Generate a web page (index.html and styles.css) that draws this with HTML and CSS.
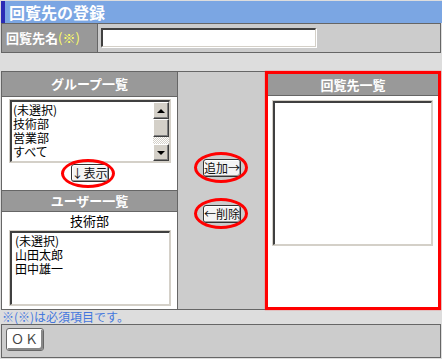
FILE: index.html
```html
<!DOCTYPE html>
<html lang="ja">
<head>
<meta charset="utf-8">
<title>回覧先の登録</title>
<link rel="stylesheet" href="styles.css">
</head>
<body>
<div class="title">回覧先の登録</div>
<div class="form-row">
  <div class="label">回覧先名<span class="req">(※)</span></div>
  <div class="value"><div class="input"></div></div>
</div>
<div class="main">
  <div class="left">
    <div class="panel-head">グループ一覧</div>
    <div class="group-body">
      <div class="listbox group-list">
        <div class="lb-inner">
          <div class="items">
            <div>(未選択)</div>
            <div>技術部</div>
            <div>営業部</div>
            <div>すべて</div>
          </div>
          <div class="scrollbar">
            <div class="sb-btn"><span class="arrow-up"></span></div>
            <div class="sb-thumb"></div>
            <div class="sb-track"></div>
            <div class="sb-btn"><span class="arrow-down"></span></div>
          </div>
        </div>
      </div>
      <div class="center">
        <span class="mark mark-show"><span class="btn">↓表示</span></span>
      </div>
    </div>
    <div class="panel-head user-head">ユーザー一覧</div>
    <div class="user-body">
      <div class="dept">技術部</div>
      <div class="listbox user-list">
        <div class="lb-inner">
          <div class="items">
            <div>(未選択)</div>
            <div>山田太郎</div>
            <div>田中雄一</div>
          </div>
        </div>
      </div>
    </div>
  </div>
  <div class="middle">
    <span class="mark mark-mid"><span class="btn">追加→</span></span>
    <span class="mark mark-mid"><span class="btn">←削除</span></span>
  </div>
  <div class="right">
    <div class="panel-head right-head">回覧先一覧</div>
    <div class="listbox dest-list">
      <div class="lb-inner"></div>
    </div>
  </div>
</div>
<div class="note">※(※)は必須項目です。</div>
<div class="okbar"><span class="btn ok">ＯＫ</span></div>
</body>
</html>
```
FILE: styles.css
```css
* { box-sizing: border-box; }
html, body { margin: 0; padding: 0; }
body {
  width: 442px;
  height: 359px;
  overflow: hidden;
  background: #dddddd;
  font-family: "Noto Sans CJK JP", "Liberation Sans", sans-serif;
  font-size: 12px;
  color: #000;
}
.title {
  margin: 1px 0 0 1px;
  height: 22px;
  background: #7ba6e3;
  border-left: 4px solid #2b2bb5;
  padding-left: 4px;
  color: #fff;
  font-weight: bold;
  font-size: 16px;
  line-height: 22px;
}
.form-row {
  margin-left: 1px;
  width: 440px;
  height: 30px;
  border: 1px solid #666;
  display: flex;
  background: #cccccc;
}
.label {
  width: 96px;
  border-right: 1px solid #666;
  background: #999999;
  padding-left: 4px;
  color: #fff;
  font-weight: bold;
  font-size: 13px;
  line-height: 27px;
}
.req { color: #ffff66; font-weight: normal; }
.value { padding: 4px 0 0 3px; }
.input {
  width: 215px;
  height: 19px;
  background: #fff;
  border-style: solid;
  border-width: 2px 1px 1px 2px;
  border-color: #404040 #d4d0c8 #d4d0c8 #404040;
  box-shadow: 1px 1px 0 #fff;
}
.main {
  display: flex;
  margin: 18px 0 0 1px;
  width: 440px;
  height: 239px;
}
.left {
  width: 177px;
  border: 1px solid #666;
  background: #fff;
  display: flex;
  flex-direction: column;
}
.panel-head {
  height: 25px;
  background: #999999;
  border-bottom: 1px solid #666;
  color: #fff;
  font-weight: bold;
  font-size: 13px;
  line-height: 24px;
  text-align: center;
}
.group-body { height: 93px; padding-top: 2px; }
.user-head { height: 22px; border-top: 1px solid #666; line-height: 20px; }
.user-body { flex: 1; padding-top: 1px; }
.dept { height: 16px; line-height: 16px; text-align: center; font-size: 13px; }
.listbox {
  margin-left: 7px;
  width: 162px;
  border: 1px solid #d4d0c8;
  background: #fff;
}
.lb-inner {
  height: 100%;
  display: flex;
  border-style: solid;
  border-width: 2px 1px 1px 2px;
  border-color: #404040 #d4d0c8 #d4d0c8 #404040;
}
.group-list { height: 64px; }
.user-list { height: 76px; margin-top: 1px; }
.dest-list { height: 146px; width: 161px; margin: 4px 0 0 4px; }
.items { flex: 1; padding: 1px 0 0 1px; line-height: 14px; font-size: 12px; }
.user-list .items { padding-left: 3px; padding-top: 1px; }
.scrollbar {
  width: 16px;
  display: flex;
  flex-direction: column;
}
.sb-btn, .sb-thumb {
  background: #d4d0c8;
  border-style: solid;
  border-width: 1px;
  border-color: #fff #404040 #404040 #fff;
  box-shadow: inset -1px -1px 0 #808080;
  display: flex;
  align-items: center;
  justify-content: center;
}
.sb-btn { height: 17px; }
.sb-thumb { height: 18px; }
.sb-track {
  flex: 1;
  background-color: #fff;
  background-image: repeating-conic-gradient(#d4d0c8 0 25%, #fff 0 50%);
  background-size: 2px 2px;
}
.arrow-up, .arrow-down { width: 0; height: 0; border-left: 4px solid transparent; border-right: 4px solid transparent; }
.arrow-up { border-bottom: 4px solid #000; }
.arrow-down { border-top: 4px solid #000; }
.center { text-align: center; margin-top: 1px; }
.btn {
  display: inline-block;
  width: 38px;
  height: 18px;
  background: #f4f4f4;
  border: 1px solid #333;
  border-radius: 3px;
  box-shadow: inset 1px 1px 0 #fff, inset -1px -1px 0 #999;
  font-size: 12px;
  line-height: 16px;
  text-align: center;
  color: #111;
  vertical-align: top;
}
.mark { position: relative; display: inline-block; vertical-align: top; }
.mark::after {
  content: "";
  position: absolute;
  border: 3px solid #ff0000;
  border-radius: 50%;
}
.mark-show::after { top: -5px; bottom: -6px; left: -10px; right: -6px; }
.mark-mid::after { top: -7px; bottom: -6px; left: -9px; right: -7px; }
.middle {
  width: 87px;
  background: #cccccc;
  border-top: 1px solid #666;
  border-bottom: 1px solid #666;
  display: flex;
  flex-direction: column;
  align-items: center;
  justify-content: center;
  gap: 28px;
  padding-left: 1px;
}
.right {
  width: 176px;
  border: 3px solid #ff0000;
  background: #fff;
  box-shadow: 0 0 1px #ff3030;
}
.right-head { height: 22px; line-height: 21px; }
.note {
  height: 14px;
  padding-left: 2px;
  color: #4477dd;
  font-size: 12px;
  line-height: 14px;
}
.okbar {
  margin-left: 1px;
  width: 440px;
  height: 34px;
  border: 1px solid #666;
  background: #cccccc;
  padding: 3px 0 0 4px;
}
.btn.ok {
  height: 23px;
  border-color: #666;
  box-shadow: inset 1px 1px 0 #fff, inset -2px -2px 0 #888;
  background: #fff;
  color: #444;
  font-size: 13px;
  line-height: 20px;
  letter-spacing: 1px;
}
```
